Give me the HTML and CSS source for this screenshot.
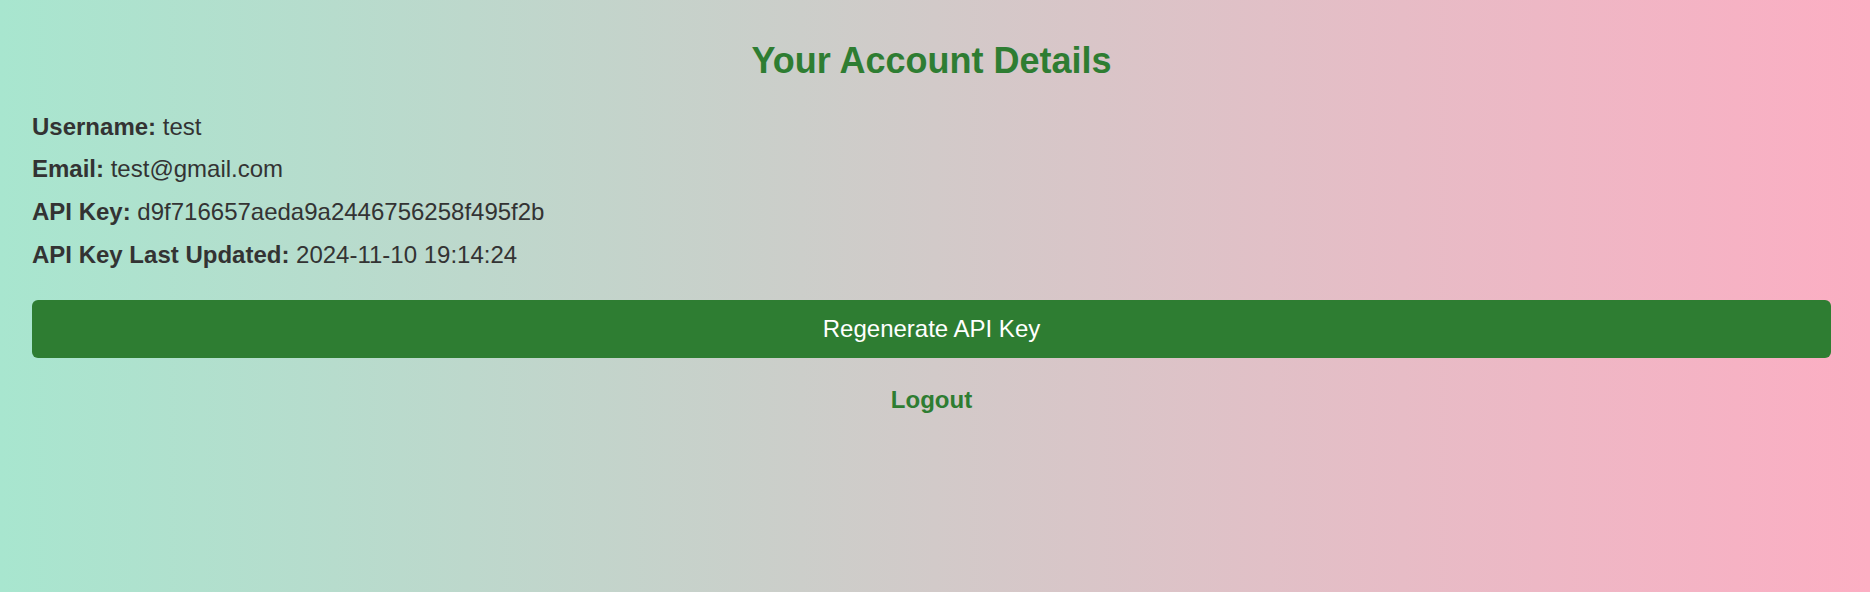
FILE: index.html
```html
<!DOCTYPE html>
<html lang="en">
<head>
<meta charset="utf-8">
<title>Your Account Details</title>
<link rel="stylesheet" href="styles.css">
</head>
<body>
<main class="page">
  <h1 class="title">Your Account Details</h1>
  <div class="details">
    <p class="row"><strong>Username:</strong> test</p>
    <p class="row"><strong>Email:</strong> test@gmail.com</p>
    <p class="row"><strong>API Key:</strong> d9f716657aeda9a2446756258f495f2b</p>
    <p class="row"><strong>API Key Last Updated:</strong> 2024-11-10 19:14:24</p>
  </div>
  <button class="regen" type="button">Regenerate API Key</button>
  <a class="logout" href="#">Logout</a>
</main>
</body>
</html>
```
FILE: styles.css
```css
html, body {
  margin: 0;
  padding: 0;
}

body {
  min-height: 592px;
  background: linear-gradient(to right, #a8e6cf, #fcaec3);
  font-family: "Liberation Sans", Arial, sans-serif;
  color: #333333;
}

.page {
  display: flex;
  flex-direction: column;
  padding: 40px 39px 0 32px;
}

.title {
  margin: 0;
  font-size: 36px;
  line-height: 42px;
  font-weight: bold;
  color: #2e7d32;
  text-align: center;
}

.details {
  display: flex;
  flex-direction: column;
  margin-top: 23.5px;
}

.row {
  margin: 0;
  font-size: 24px;
  line-height: 42.67px;
}

.row strong {
  font-weight: bold;
}

.regen {
  margin-top: 23.5px;
  height: 58px;
  border: none;
  border-radius: 6px;
  background: #2e7d32;
  color: #ffffff;
  font-family: "Liberation Sans", Arial, sans-serif;
  font-size: 24px;
  cursor: pointer;
}

.logout {
  align-self: center;
  margin-top: 27.7px;
  font-size: 24px;
  line-height: 30px;
  font-weight: bold;
  color: #2e7d32;
  text-decoration: none;
}
```
